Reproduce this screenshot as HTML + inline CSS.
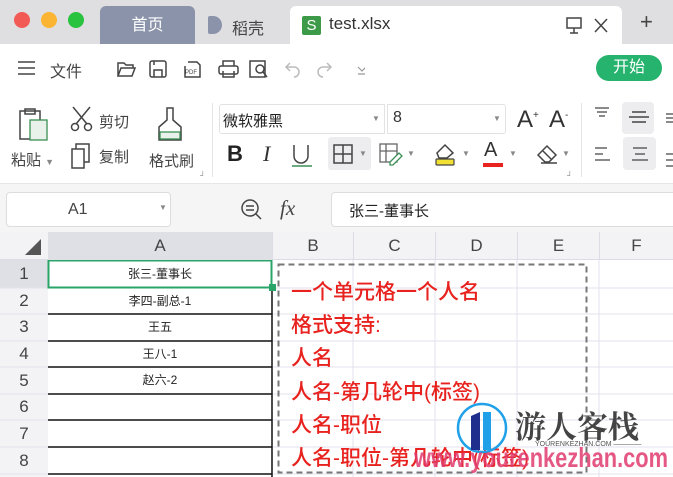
<!DOCTYPE html>
<html><head><meta charset="utf-8"><style>
*{margin:0;padding:0;box-sizing:border-box}
body{width:673px;height:477px;overflow:hidden;background:#fff;font-family:"Liberation Sans","Noto Sans CJK SC",sans-serif;position:relative;color:#333}
.a{position:absolute}
.dot{position:absolute;top:12px;width:16px;height:16px;border-radius:50%}
.t{font-size:15px;color:#444;white-space:nowrap}
.ic{position:absolute}
.g{stroke:#444;stroke-width:1.5;fill:none}
.rown{position:absolute;left:0;width:48px;text-align:center;font-size:17px;color:#444}
.col{position:absolute;top:232px;height:28px;line-height:28px;text-align:center;font-size:17px;color:#444}
.red{position:absolute;left:291px;font-size:21px;color:#e8221e;white-space:nowrap;font-weight:500}
.cell{position:absolute;left:48px;width:224px;text-align:center;font-size:12px;color:#222}
</style></head><body>
<div class="a" style="left:0;top:0;width:673px;height:44px;background:#dfdfe1"></div>
<div class="dot" style="left:14px;background:#f25a55"></div>
<div class="dot" style="left:41px;background:#fbb532"></div>
<div class="dot" style="left:68px;background:#2ac33f"></div>
<div class="a" style="left:100px;top:6px;width:95px;height:38px;background:#8a93a9;border-radius:6px 6px 0 0;color:#fff;font-size:16px;text-align:center;line-height:40px">首页</div>
<div class="a" style="left:208px;top:16px;width:14px;height:18px;background:#8a93a9;border-radius:2px 9px 9px 2px"></div>
<div class="a t" style="left:232px;top:15px;font-size:16px;color:#444">稻壳</div>
<div class="a" style="left:290px;top:6px;width:332px;height:40px;background:#fff;border-radius:6px 6px 0 0"></div>
<div class="a" style="left:302px;top:16px;width:19px;height:19px;background:#3d9a48;border-radius:2px;color:#fff;font-size:15px;text-align:center;line-height:19px">S</div>
<div class="a t" style="left:329px;top:14px;font-size:17px;color:#333">test.xlsx</div>
<svg class="ic" style="left:566px;top:17px" width="50" height="18"><rect x="1" y="1" width="14" height="10" class="g" stroke="#999"/><path d="M8 11v5M4 16h8" class="g"/><path d="M29 2l12 13M41 2L29 15" class="g"/></svg>
<div class="a" style="left:640px;top:9px;font-size:22px;color:#444">+</div>
<svg class="ic" style="left:17px;top:60px" width="20" height="16"><path d="M1 2h17M1 8h17M1 14h17" class="g"/></svg>
<div class="a t" style="left:50px;top:58px;font-size:16px">文件</div>
<svg class="ic" style="left:115px;top:58px" width="250" height="22">
<path d="M3 18V5h6l2 2h7v3M3 18l3-8h14l-3 8z" class="g"/>
<rect x="35" y="3" width="16" height="16" rx="2" class="g"/><path d="M39 19v-7h8v7M39 3v4" class="g"/>
<path d="M73 4h9l3 3v12H70V8" class="g"/><text x="70" y="16" font-size="6" fill="#444">PDF</text>
<rect x="104" y="8" width="19" height="8" rx="2" class="g"/><path d="M108 8V3h11v5M108 13v6h11v-6" class="g"/>
<rect x="135" y="3" width="15" height="16" class="g"/><circle cx="145" cy="11" r="4" class="g"/><path d="M148 14l4 5" class="g"/>
<path d="M175 5l-4 4 4 4M171 9h8a5 5 0 010 10" stroke="#bbb" stroke-width="1.5" fill="none"/>
<path d="M212 5l4 4-4 4M216 9h-8a5 5 0 000 10" stroke="#bbb" stroke-width="1.5" fill="none"/>
<path d="M243 9l4 4 4-4M243 16h8" stroke="#999" stroke-width="1.2" fill="none"/>
</svg>
<div class="a" style="left:596px;top:55px;width:66px;height:26px;border-radius:13px;background:#26b36d;color:#fff;font-size:16px;text-align:center;line-height:26px">开始</div>
<svg class="ic" style="left:18px;top:107px" width="35" height="35"><rect x="2" y="4" width="20" height="28" class="g"/><rect x="7" y="2" width="10" height="5" class="g"/><rect x="12" y="13" width="17" height="20" fill="#e8f2ea" stroke="#3a8f55" stroke-width="1.3"/></svg>
<div class="a t" style="left:11px;top:149px">粘贴 <span style="font-size:9px;color:#888">▼</span></div>
<svg class="ic" style="left:70px;top:105px" width="25" height="28"><circle cx="5" cy="22" r="3.5" class="g"/><circle cx="18" cy="22" r="3.5" class="g"/><path d="M3 2l14 17M20 2L6 19" class="g"/></svg>
<div class="a t" style="left:99px;top:111px">剪切</div>
<svg class="ic" style="left:70px;top:143px" width="25" height="28"><rect x="6" y="1" width="13" height="18" class="g"/><rect x="2" y="6" width="12" height="19" fill="#fff" stroke="#444" stroke-width="1.5"/></svg>
<div class="a t" style="left:99px;top:146px">复制</div>
<svg class="ic" style="left:156px;top:106px" width="30" height="38"><path d="M11 2h6v12l8 7v13H3V21l8-7z" class="g"/><rect x="4" y="26" width="20" height="7" fill="#e8f2ea" stroke="#3a8f55" stroke-width="1.3"/></svg>
<div class="a t" style="left:149px;top:150px">格式刷</div>
<div class="a" style="left:212px;top:103px;width:1px;height:74px;background:#e4e4e4"></div>
<div class="a" style="left:219px;top:104px;width:166px;height:30px;border:1px solid #e2e2e2;border-radius:3px 0 0 3px"></div>
<div class="a t" style="left:223px;top:110px;color:#222;font-size:15px">微软雅黑</div>
<div class="a" style="left:372px;top:114px;font-size:8px;color:#888">▼</div>
<div class="a" style="left:387px;top:104px;width:119px;height:30px;border:1px solid #e2e2e2;border-radius:0 3px 3px 0"></div>
<div class="a t" style="left:393px;top:109px;color:#333;font-size:16px">8</div>
<div class="a" style="left:493px;top:114px;font-size:8px;color:#888">▼</div>
<div class="a" style="left:517px;top:106px;font-size:24px;color:#333;font-weight:300">A<sup style="font-size:10px">+</sup></div>
<div class="a" style="left:549px;top:106px;font-size:24px;color:#333;font-weight:300">A<sup style="font-size:10px">-</sup></div>
<div class="a" style="left:227px;top:141px;font-size:22px;color:#222;font-weight:bold">B</div>
<div class="a" style="left:263px;top:141px;font-size:22px;color:#333;font-style:italic;font-family:'Liberation Serif',serif">I</div>
<svg class="ic" style="left:290px;top:144px" width="24" height="24"><path d="M4 1v11a7 7 0 0014 0V1" class="g"/><path d="M2 22h20" stroke="#3a8f55" stroke-width="1.5"/></svg>
<div class="a" style="left:328px;top:137px;width:43px;height:33px;background:#ededef;border-radius:3px"></div>
<svg class="ic" style="left:332px;top:143px" width="22" height="22"><rect x="2" y="2" width="18" height="18" class="g"/><path d="M11 2v18M2 11h18" class="g"/></svg>
<div class="a" style="left:359px;top:149px;font-size:8px;color:#888">▼</div>
<svg class="ic" style="left:378px;top:142px" width="28" height="24"><rect x="2" y="2" width="17" height="18" stroke="#666" stroke-width="1.3" fill="none"/><path d="M8 2v18M2 9h17" stroke="#666" stroke-width="1.3"/><path d="M12 20l9-9 3 3-9 9h-3z" stroke="#3a8f55" stroke-width="1.3" fill="#fff"/></svg>
<div class="a" style="left:407px;top:149px;font-size:8px;color:#888">▼</div>
<svg class="ic" style="left:433px;top:141px" width="26" height="26"><path d="M4 12l8-8 8 8-6 5H6z" class="g"/><rect x="3" y="18" width="18" height="6" rx="1" fill="#f0e033" stroke="#444" stroke-width="1.2"/></svg>
<div class="a" style="left:462px;top:149px;font-size:8px;color:#888">▼</div>
<div class="a" style="left:484px;top:139px;font-size:20px;color:#333;font-weight:300">A</div>
<div class="a" style="left:483px;top:163px;width:20px;height:4px;background:#e8221e"></div>
<div class="a" style="left:509px;top:149px;font-size:8px;color:#888">▼</div>
<svg class="ic" style="left:535px;top:142px" width="26" height="24"><path d="M3 13L12 4l9 9-7 7H10z" class="g"/><path d="M8 9l9 9M6 21h16" class="g"/></svg>
<div class="a" style="left:562px;top:149px;font-size:8px;color:#888">▼</div>
<div class="a" style="left:200px;top:171px;font-size:8px;color:#888">┘</div>
<div class="a" style="left:567px;top:171px;font-size:8px;color:#888">┘</div>
<div class="a" style="left:581px;top:103px;width:1px;height:74px;background:#e4e4e4"></div>
<svg class="ic" style="left:592px;top:106px" width="20" height="14"><path d="M3 2h14M5 6h10M7 10h6" stroke="#444" stroke-width="1.2"/></svg>
<div class="a" style="left:622px;top:102px;width:32px;height:32px;background:#ededef;border-radius:4px"></div>
<svg class="ic" style="left:627px;top:110px" width="24" height="14"><path d="M5 2h14M2 7h20M5 12h14" stroke="#444" stroke-width="1.4"/></svg>
<svg class="ic" style="left:593px;top:146px" width="20" height="18"><path d="M2 2h12M2 8h8M2 14h15" stroke="#444" stroke-width="1.3"/></svg>
<div class="a" style="left:623px;top:137px;width:33px;height:33px;background:#ededef;border-radius:4px"></div>
<svg class="ic" style="left:630px;top:146px" width="20" height="18"><path d="M3 2h14M5 8h10M2 14h16" stroke="#444" stroke-width="1.3"/></svg>
<svg class="ic" style="left:664px;top:112px" width="9" height="60"><path d="M2 2h7M2 6h7M2 10h7M2 42h7M2 48h7M2 54h7" stroke="#444" stroke-width="1.2"/></svg>
<div class="a" style="left:0;top:183px;width:673px;height:1px;background:#e6e6e6"></div>
<div class="a" style="left:0;top:184px;width:673px;height:48px;background:#f5f5f6"></div>
<div class="a" style="left:6px;top:192px;width:165px;height:35px;background:#fff;border:1px solid #ddd;border-radius:4px"></div>
<div class="a t" style="left:68px;top:201px;font-size:16px;color:#444">A1</div>
<div class="a" style="left:159px;top:203px;font-size:8px;color:#888">▼</div>
<svg class="ic" style="left:240px;top:198px" width="24" height="24"><circle cx="10" cy="10" r="8" class="g"/><path d="M6 8h8M6 12h8M16 16l5 5" class="g"/></svg>
<div class="a" style="left:280px;top:196px;font-size:21px;font-style:italic;color:#444;font-family:'Liberation Serif',serif">fx</div>
<div class="a" style="left:331px;top:192px;width:350px;height:35px;background:#fff;border:1px solid #ddd;border-radius:4px"></div>
<div class="a t" style="left:349px;top:200px;font-size:15px;color:#222">张三-董事长</div>
<div class="a" style="left:0;top:232px;width:673px;height:245px;background:#fff"></div>
<div class="a" style="left:0;top:232px;width:48px;height:245px;background:#f3f3f5"></div>
<div class="a" style="left:0;top:232px;width:673px;height:28px;background:#f3f3f5;border-bottom:1px solid #dcdce6"></div>
<div class="a" style="left:48px;top:232px;width:224px;height:28px;background:#dfe0e6"></div>
<div class="a" style="left:0;top:260px;width:48px;height:28px;background:#dfe0e6"></div>
<svg class="ic" style="left:24px;top:238px" width="18" height="18"><path d="M17 1V17H1z" fill="#555"/></svg>
<div class="col" style="left:48px;width:224px">A</div>
<div class="col" style="left:272px;width:81px;border-left:1px solid #dcdce6">B</div>
<div class="col" style="left:353px;width:82px;border-left:1px solid #dcdce6">C</div>
<div class="col" style="left:435px;width:82px;border-left:1px solid #dcdce6">D</div>
<div class="col" style="left:517px;width:82px;border-left:1px solid #dcdce6">E</div>
<div class="col" style="left:599px;width:74px;border-left:1px solid #dcdce6">F</div>
<svg class="ic" style="left:0;top:260px" width="673" height="217">
<g stroke="#e2e2ec" stroke-width="1">
<path d="M0 28H673M0 54H673M0 81H673M0 107H673M0 134H673M0 160H673M0 187H673M0 214H673"/>
<path d="M353 0V217M435 0V217M517 0V217M599 0V217"/>
</g>
<g stroke="#111" stroke-width="1.5"><path d="M48 54H272M48 81H272M48 107H272M48 134H272M48 160H272M48 187H272M48 214H272M272 28V217"/></g>
<rect x="48.5" y="0.5" width="223" height="27" fill="none" stroke="#2aa56a" stroke-width="2"/>
<rect x="269" y="24" width="7" height="7" fill="#2aa56a"/>
<rect x="278.5" y="4.5" width="308" height="208" fill="none" stroke="#777" stroke-width="2" stroke-dasharray="6 4"/>
</svg>
<div class="rown" style="top:264px">1</div><div class="rown" style="top:291px">2</div><div class="rown" style="top:317px">3</div><div class="rown" style="top:344px">4</div><div class="rown" style="top:371px">5</div><div class="rown" style="top:397px">6</div><div class="rown" style="top:424px">7</div><div class="rown" style="top:451px">8</div>
<div class="cell" style="top:265px">张三-董事长</div>
<div class="cell" style="top:292px">李四-副总-1</div>
<div class="cell" style="top:318px">王五</div>
<div class="cell" style="top:345px">王八-1</div>
<div class="cell" style="top:371px">赵六-2</div>
<div class="red" style="top:276px">一个单元格一个人名</div>
<div class="red" style="top:309px">格式支持:</div>
<div class="red" style="top:342px">人名</div>
<div class="red" style="top:376px">人名-第几轮中(标签)</div>
<div class="red" style="top:409px">人名-职位</div>
<div class="red" style="top:442px">人名-职位-第几轮中(标签)</div>
<svg class="ic" style="left:456px;top:402px" width="56" height="56"><circle cx="26" cy="26" r="24" fill="none" stroke="#1fa0e8" stroke-width="2.5"/><path d="M15 14l9-4v38h-9z" fill="#1f2d8c"/><path d="M27 10h8v38h-8z" fill="#1fa0e8"/></svg>
<div class="a" style="left:515px;top:402px;font-size:31px;font-weight:bold;color:#444;font-family:'Noto Serif CJK SC','Liberation Serif',serif;white-space:nowrap">游人客栈</div>
<div class="a" style="left:535px;top:441px;font-size:7px;color:#555;white-space:nowrap">YOURENKEZHAN.COM ————</div>
<div class="a" style="left:414px;top:442px;font-size:28px;font-weight:bold;color:#e03c6e;opacity:.85;white-space:nowrap;transform:scaleX(0.78);transform-origin:left top">www.yourenkezhan.com</div>
</body></html>
